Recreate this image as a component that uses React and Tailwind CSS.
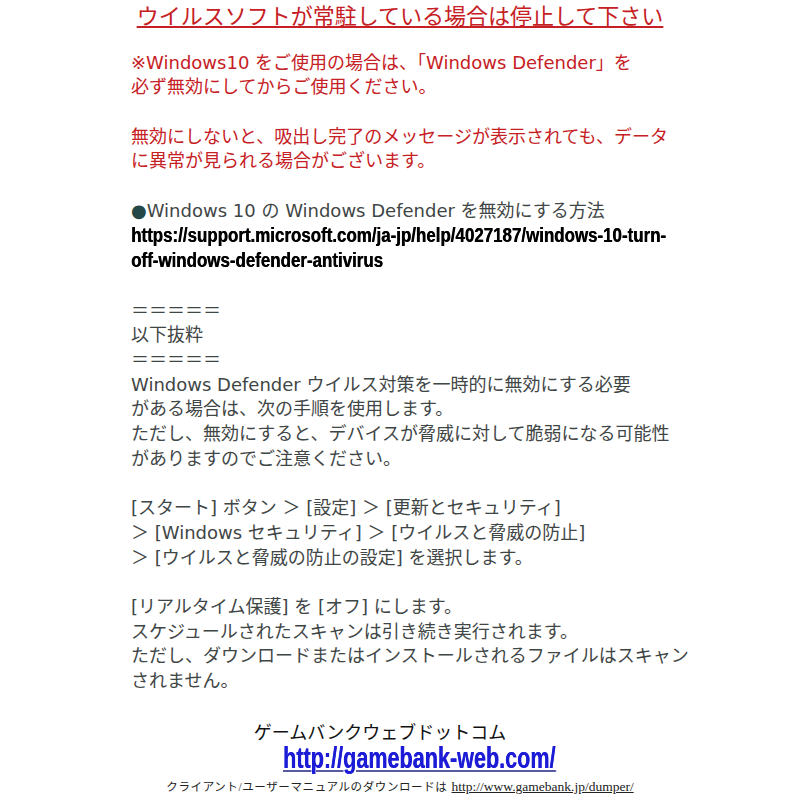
export default function App() {
    const jp = "font-['DejaVu_Sans','Noto_Sans_CJK_JP',sans-serif]";
    const heavy =
        "font-['Liberation_Sans',sans-serif] font-bold [text-shadow:0.5px_0_0_currentColor]";

    return (
        <div className="w-[800px] h-[800px] bg-white overflow-hidden">
            <div className="pt-[2px] font-['Noto_Sans_CJK_JP',sans-serif] text-center text-[22px] leading-[24px] text-[#c62024]">
                <span className="underline underline-offset-[2px] decoration-[1.5px]">
                    ウイルスソフトが常駐している場合は停止して下さい
                </span>
            </div>

            <div className={`${jp} ml-[131px] w-[560px] mt-[24.6px] text-[18px] leading-[24.7px] whitespace-nowrap text-[#3f4646]`}>
                <p className="text-[#c62024]">
                    ※Windows10 をご使用の場合は、「Windows Defender」を
                    <br />
                    必ず無効にしてからご使用ください。
                </p>
                <p className="mt-[24.7px] text-[#c62024]">
                    無効にしないと、吸出し完了のメッセージが表示されても、データ
                    <br />
                    に異常が見られる場合がございます。
                </p>

                <div className="mt-[24.7px]">
                    <p>
                        <span className="text-[#244848]">●</span>Windows 10 の Windows Defender を無効にする方法
                    </p>
                    <p className={`${heavy} inline-block origin-left scale-x-[0.846] text-[20px] text-black`}>
                        https://support.microsoft.com/ja-jp/help/4027187/windows-10-turn-
                        <br />
                        off-windows-defender-antivirus
                    </p>
                </div>

                <div className="mt-[24.7px]">
                    <p>＝＝＝＝＝</p>
                    <p>以下抜粋</p>
                    <p>＝＝＝＝＝</p>
                    <p>
                        Windows Defender ウイルス対策を一時的に無効にする必要
                        <br />
                        がある場合は、次の手順を使用します。
                        <br />
                        ただし、無効にすると、デバイスが脅威に対して脆弱になる可能性
                        <br />
                        がありますのでご注意ください。
                    </p>
                </div>

                <p className="mt-[24.7px]">
                    [スタート] ボタン ＞ [設定] ＞ [更新とセキュリティ]
                    <br />
                    ＞ [Windows セキュリティ] ＞ [ウイルスと脅威の防止]
                    <br />
                    ＞ [ウイルスと脅威の防止の設定] を選択します。
                </p>

                <p className="mt-[24.7px]">
                    [リアルタイム保護] を [オフ] にします。
                    <br />
                    スケジュールされたスキャンは引き続き実行されます。
                    <br />
                    ただし、ダウンロードまたはインストールされるファイルはスキャン
                    <br />
                    されません。
                </p>
            </div>

            <div className="mt-[25px] flex flex-col items-center">
                <p className="font-['Noto_Sans_CJK_JP',sans-serif] text-[18px] leading-[24px] text-[#111] mr-[40px]">
                    ゲームバンクウェブドットコム
                </p>
                <p className={`${heavy} ml-[38px] origin-center scale-x-[0.72] text-[30px] leading-[30px] text-[#1c1cd6] underline decoration-[#5a5aa0] decoration-2 underline-offset-2 whitespace-nowrap`}>
                    http://gamebank-web.com/
                </p>
                <p className="mt-[3px] text-[#222] whitespace-nowrap leading-[18px]">
                    <span className="font-['Liberation_Serif','Noto_Sans_CJK_JP',serif] text-[11.5px] tracking-[0.6px]">
                        クライアント/ユーザーマニュアルのダウンロードは
                    </span>{" "}
                    <span className="font-['Liberation_Serif',serif] text-[13.5px] underline">
                        http://www.gamebank.jp/dumper/
                    </span>
                </p>
            </div>
        </div>
    );
}
